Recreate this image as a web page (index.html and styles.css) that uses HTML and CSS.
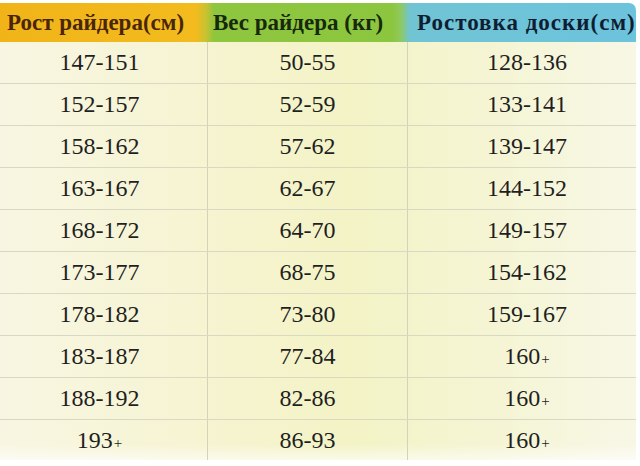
FILE: index.html
```html
<!DOCTYPE html>
<html>
<head>
<meta charset="utf-8">
<link rel="stylesheet" href="styles.css">
</head>
<body>
<div class="chart">
  <div class="head">
    <div class="hc h1">Рост райдера(см)</div>
    <div class="hc h2">Вес райдера (кг)</div>
    <div class="hc h3">Ростовка доски(см)</div>
  </div>
  <div class="body">
    <div class="row"><div class="c">147-151</div><div class="c">50-55</div><div class="c">128-136</div></div>
    <div class="row"><div class="c">152-157</div><div class="c">52-59</div><div class="c">133-141</div></div>
    <div class="row"><div class="c">158-162</div><div class="c">57-62</div><div class="c">139-147</div></div>
    <div class="row"><div class="c">163-167</div><div class="c">62-67</div><div class="c">144-152</div></div>
    <div class="row"><div class="c">168-172</div><div class="c">64-70</div><div class="c">149-157</div></div>
    <div class="row"><div class="c">173-177</div><div class="c">68-75</div><div class="c">154-162</div></div>
    <div class="row"><div class="c">178-182</div><div class="c">73-80</div><div class="c">159-167</div></div>
    <div class="row"><div class="c">183-187</div><div class="c">77-84</div><div class="c">160<span class="plus">+</span></div></div>
    <div class="row"><div class="c">188-192</div><div class="c">82-86</div><div class="c">160<span class="plus">+</span></div></div>
    <div class="row last"><div class="c">193<span class="plus">+</span></div><div class="c">86-93</div><div class="c">160<span class="plus">+</span></div></div>
  </div>
</div>
</body>
</html>
```
FILE: styles.css
```css
html, body {
  margin: 0;
  padding: 0;
  background: #ffffff;
}
body {
  width: 640px;
  height: 466px;
  overflow: hidden;
  font-family: "Liberation Serif", serif;
}
.chart {
  width: 636px;
  padding-top: 3px;
}
.head {
  display: grid;
  grid-template-columns: 207px 200px 229px;
  height: 39px;
  background: linear-gradient(90deg, #f0b418 0px, #f3bb1e 196px, #c8c230 206px, #8ec63e 214px, #8cc63f 392px, #90c95a 400px, #70c4d4 410px, #6cc3dc 636px);
  border-radius: 0 7px 0 0;
}
.hc {
  display: flex;
  align-items: center;
  white-space: nowrap;
  font-family: "Liberation Serif", serif;
  font-weight: bold;
  font-size: 23px;
}
.h1 { color: #4a2608; padding-left: 7px; }
.h2 { color: #17280c; padding-left: 6px; }
.h3 { color: #0f1e33; padding-left: 10px; letter-spacing: 1px; }
.body {
  background: linear-gradient(90deg, #f8f6e2 0%, #f6f4d2 30%, #f3f3c6 55%, #f5f5d6 80%, #f8f7e6 100%);
}
.row {
  display: grid;
  grid-template-columns: 207px 200px 229px;
  height: 42px;
  border-bottom: 1px solid #d9d8c2;
  box-sizing: border-box;
}
.row.last {
  border-bottom: none;
  height: 40px;
  background: linear-gradient(180deg, rgba(255,255,255,0) 60%, rgba(255,255,255,0.6) 100%);
}
.c {
  display: flex;
  align-items: center;
  justify-content: center;
  font-family: "Liberation Serif", serif;
  font-size: 24px;
  color: #1f1f1f;
}
.c:first-child { padding-right: 8px; }
.c:last-child { padding-left: 10px; }
.c + .c {
  border-left: 1px solid #d3d2bb;
}
.plus {
  font-size: 15px;
  position: relative;
  top: 3px;
  margin-left: 1px;
}
```
